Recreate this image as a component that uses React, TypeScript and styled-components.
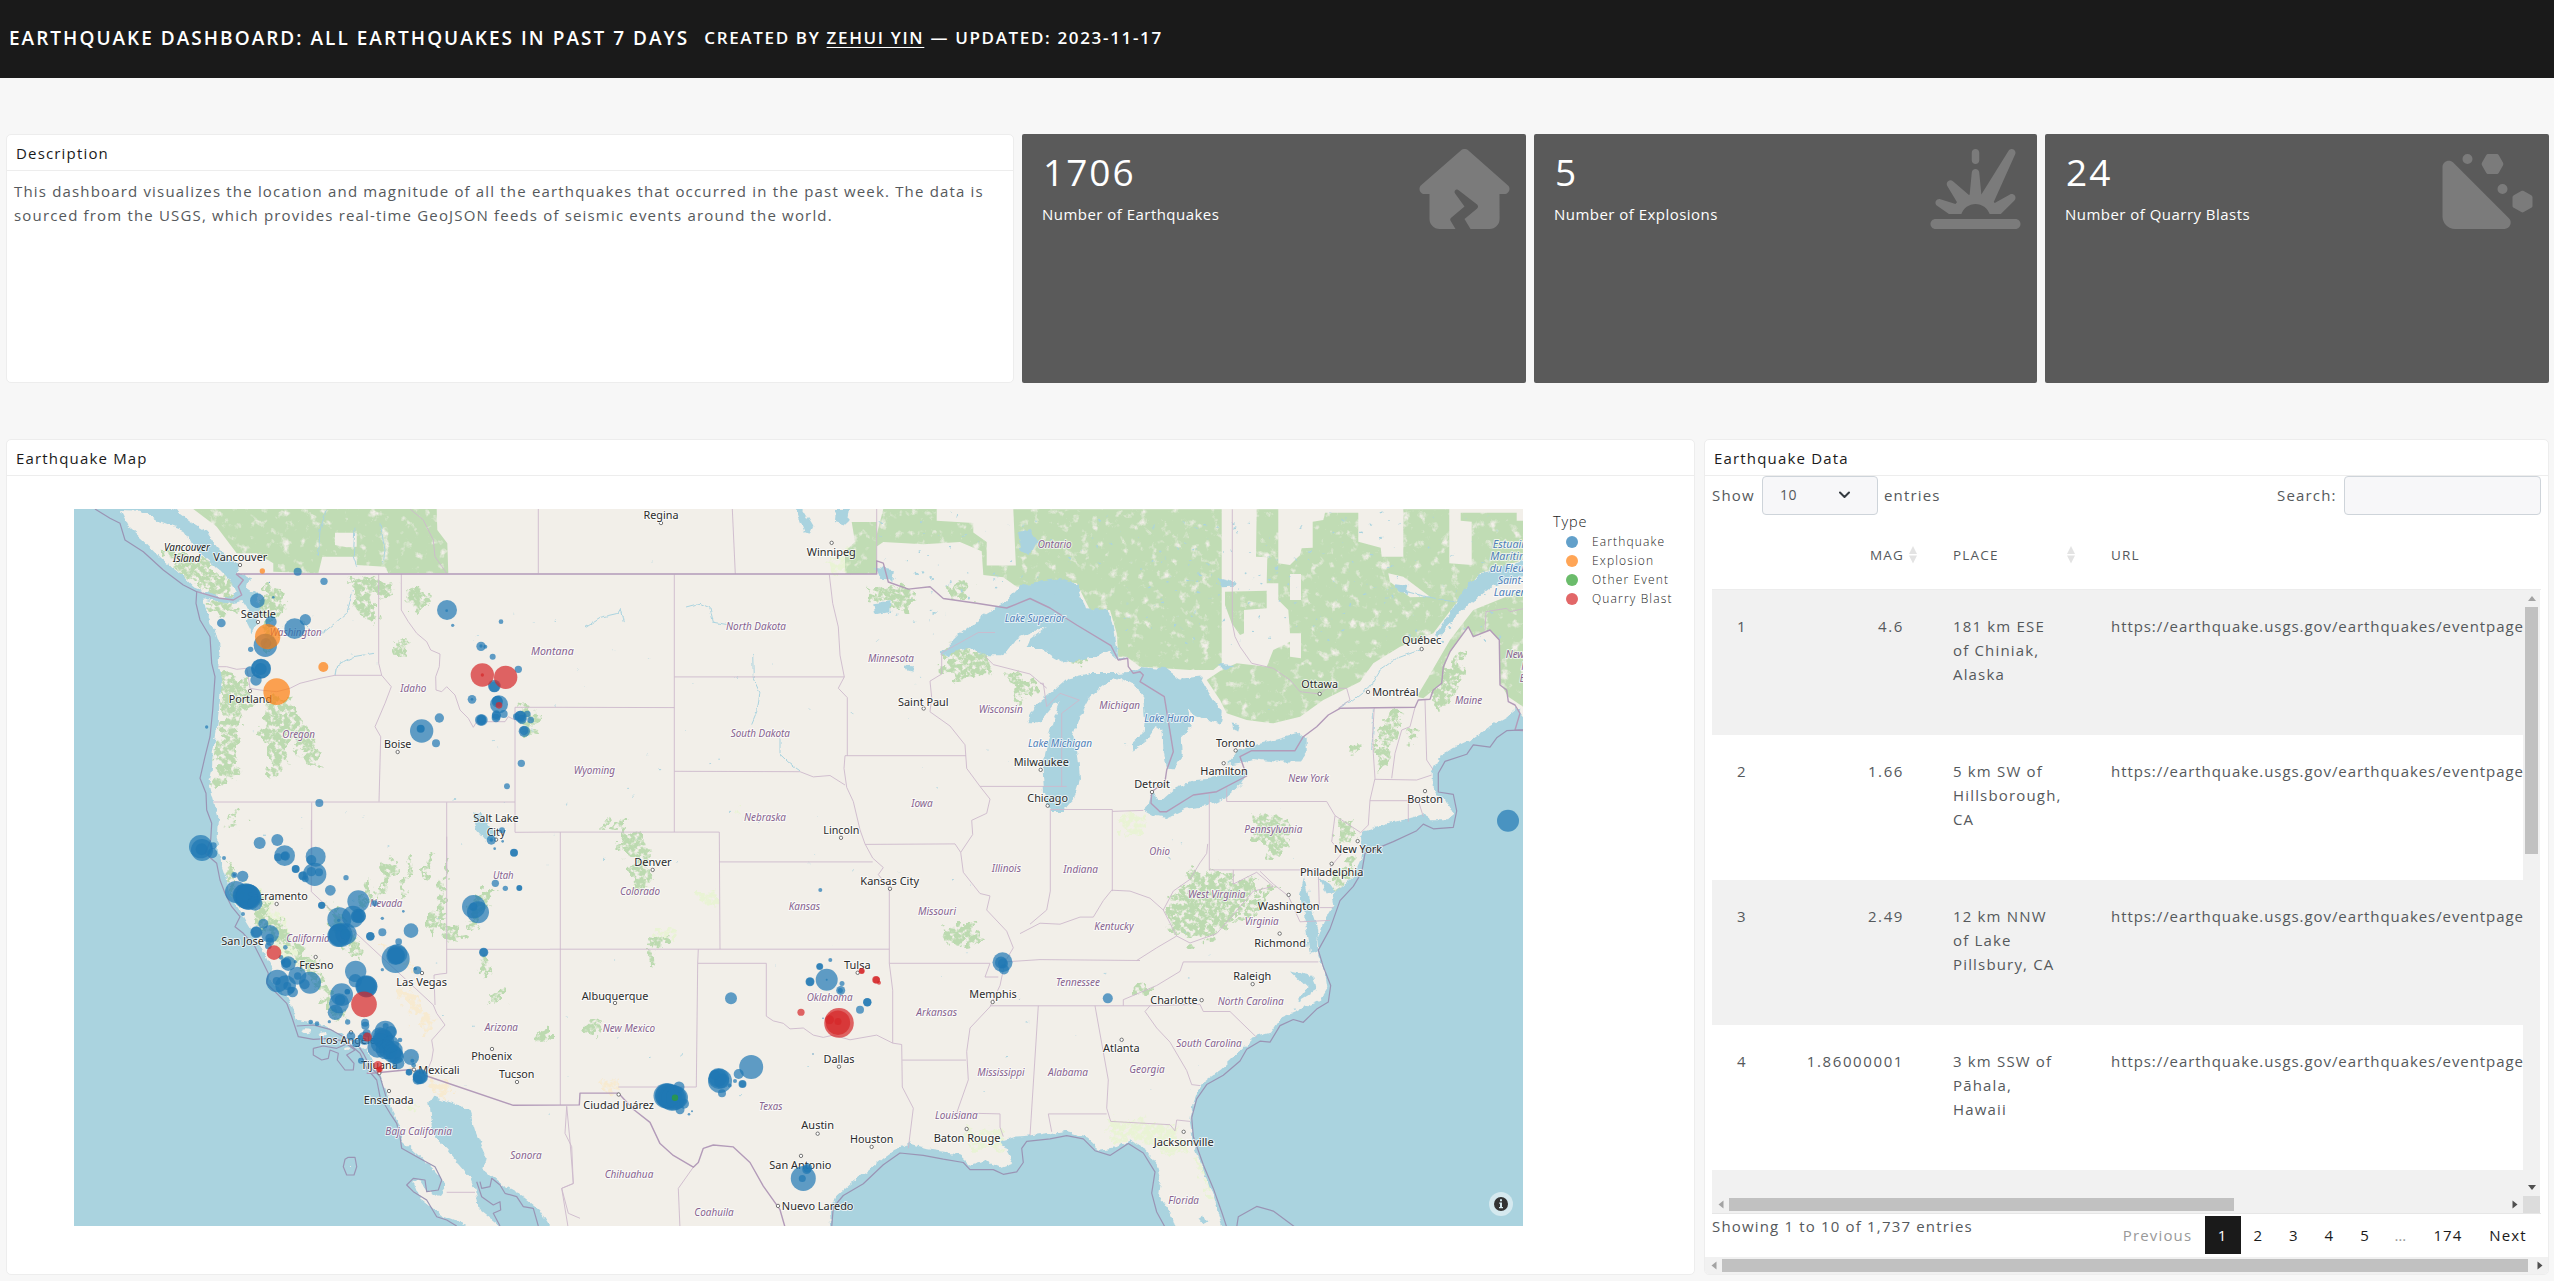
import React from 'react';
import styled, { createGlobalStyle } from 'styled-components';
import { FaHouseCrack, FaExplosion, FaHillRockslide } from 'react-icons/fa6';

const GlobalStyle = createGlobalStyle`
  *, *::before, *::after { box-sizing: border-box; }
  html, body { margin: 0; background: #f7f7f7; overflow: hidden; }
  body {
    font-family: "Open Sans", Lato, sans-serif;
    font-size: 15px;
    line-height: 24px;
    letter-spacing: 1.17px;
    color: #55595c;
  }
`;

/* ---------- page chrome ---------- */

const Page = styled.div`
  display: flex;
  flex-direction: column;
  height: 1281px;
  width: 2554px;
`;

const TopBar = styled.header`
  display: flex;
  align-items: center;
  gap: 15px;
  flex: 0 0 78px;
  padding: 0 9px 2px;
  background: #1a1a1a;
  color: #fff;
  white-space: nowrap;
`;

const Title = styled.h1`
  margin: 0;
  font-size: 19px;
  font-weight: 600;
  letter-spacing: 2.02px;
`;

const Byline = styled.span`
  font-size: 17px;
  font-weight: 600;
  letter-spacing: 1.66px;
`;

const AuthorLink = styled.a`
  color: inherit;
  text-decoration: underline;
  text-underline-offset: 3px;
  text-decoration-thickness: 1px;
`;

const SummaryRow = styled.section`
  display: grid;
  grid-template-columns: 1008px 504px 503px 504px;
  column-gap: 8px;
  flex: 0 0 249px;
  margin: 56px 5px 0 6px;
`;

const DetailRow = styled.section`
  display: grid;
  grid-template-columns: 1689px 845px;
  column-gap: 9px;
  flex: 0 0 836px;
  margin: 56px 5px 0 6px;
`;

const Card = styled.article`
  display: flex;
  flex-direction: column;
  overflow: hidden;
  min-width: 0;
  background: #fff;
  border: 1px solid #ededed;
  border-radius: 5px;
`;

const CardHeader = styled.h2`
  flex: 0 0 36px;
  margin: 0;
  padding: 6px 9px 0;
  border-bottom: 1px solid #ededed;
  color: #1a1a1a;
  font-size: 15px;
  font-weight: 400;
  letter-spacing: 1.17px;
`;

const Blurb = styled.p`
  margin: 8px 7px;
`;

/* ---------- value boxes ---------- */

const ValueBox = styled.article`
  display: flex;
  justify-content: space-between;
  padding: 15px 16px 0 20px;
  border-radius: 2px;
  background: #5a5a5a;
  color: #fff;
`;

const Value = styled.div`
  height: 44px;
  padding-left: 1px;
  font-size: 37px;
  font-weight: 500;
  line-height: 45px;
  letter-spacing: 2px;
`;

const ValueCaption = styled.div`
  margin-top: 9px;
  font-weight: 500;
  letter-spacing: 0.47px;
`;

const ValueIcon = styled.div`
  height: 80px;
  color: #7b7b7b;
  font-size: 80px;
  line-height: 0;
  svg { width: 91px; height: 80px; }
`;

type Stat = { value: string; caption: string; icon: React.ReactNode };
const stats: Stat[] = [
  { value: '1706', caption: 'Number of Earthquakes', icon: <FaHouseCrack /> },
  { value: '5', caption: 'Number of Explosions', icon: <FaExplosion /> },
  { value: '24', caption: 'Number of Quarry Blasts', icon: <FaHillRockslide /> },
];

/* ---------- map ---------- */

const MapBody = styled.div`
  display: flex;
  align-items: flex-start;
  gap: 30px;
  padding: 33px 0 0 67px;
`;

const MapSvg = styled.svg`
  display: block;
  flex: none;
  width: 1449px;
  height: 717px;
  letter-spacing: 0;
`;

const Legend = styled.div`
  padding-top: 3px;
  color: #222;
  font-weight: 300;
`;

const LegendTitle = styled.div`
  height: 20px;
  font-size: 14.5px;
  line-height: 20px;
  letter-spacing: 0.9px;
`;

const LegendItem = styled.div`
  display: flex;
  align-items: center;
  gap: 14px;
  height: 19px;
  padding-left: 13px;
  font-size: 12px;
  line-height: 19px;
  letter-spacing: 1.15px;
`;

const Swatch = styled.span<{ $color: string }>`
  width: 12px;
  height: 12px;
  border-radius: 50%;
  background: ${(p) => p.$color};
  opacity: 0.7;
`;

const BLUE = '#1f77b4';
const ORANGE = '#ff7f0e';
const GREEN = '#2ca02c';
const RED = '#d62728';

/* Each sheet has its own origin and scale; shapes are digitised per sheet. */
type Sheet = [number, number, number, number];
const NW: Sheet = [60, 490, 3, 3];
const SW: Sheet = [180, 820, 3, 3];
const MID: Sheet = [550, 490, 3, 2.119];
const EAST: Sheet = [1040, 490, 3, 2.119];
const NE: Sheet = [1040, 500, 3, 3];
const SOUTH: Sheet = [0, 2.54, 1, 1.00522];

const on = (s: Sheet, coords: string) => {
  const n = coords.trim().split(/[\s,]+/).map(Number);
  const out: string[] = [];
  for (let i = 0; i < n.length; i += 2) {
    out.push(`${(s[0] + n[i] / s[2]).toFixed(1)},${(s[1] + n[i + 1] / s[3]).toFixed(1)}`);
  }
  return out.join(' ');
};

const mainland = [
  on(NW, '330,50 390,95 440,125 470,170 500,200 540,225 530,250 570,262 560,290 590,310 600,350 590,400 575,430 560,400 570,360 550,330 500,340 430,325 440,370 465,420 480,470 475,530 485,570 478,650 470,720 458,790 455,850 448,880 460,930 475,980 470,1040 478,1090 490,1130'),
  on(SW, '140,170 145,210 165,250 190,285 200,305 215,330 235,370 255,400 275,440 265,480 300,510 330,540 340,575 350,600 400,608 430,615 480,640 510,665 560,690 580,730 598,760 612,800 625,845 635,870 660,915 665,960 720,1010 760,1050 795,1090 795,1105 780,1125 740,1112 715,1075 700,1085 720,1135 790,1190 860,1218 862,1230 968,1230 960,1218 900,1170 888,1120 870,1070 835,1030 800,985 765,955 755,900 748,850 760,830 820,850 868,870 890,940 920,1010 912,1050 975,1100 1030,1130 1080,1170 1110,1218 1112,1230'),
  on(MID, '845,1575 840,1530 860,1495 900,1470 950,1445 1000,1415 1040,1395 1080,1385 1130,1395 1180,1400 1230,1410 1260,1430 1300,1422 1350,1435 1390,1425 1370,1400 1350,1380 1400,1370 1440,1368 1500,1362'),
  on(EAST, '30,1365 80,1360 140,1372 180,1398 230,1392 270,1378 320,1400 350,1430 365,1470 360,1500 390,1530 410,1575 550,1575 545,1558 520,1500 490,1440 462,1390 450,1340 458,1300 480,1260 540,1230 600,1190 640,1160 690,1150 720,1120 770,1105 795,1095 840,1080 862,1055 855,1020 835,985 833,950 850,915 880,880 875,855 900,845 940,820 965,780 960,735 970,722 1040,706 1120,694 1160,685 1170,700 1225,700 1238,685 1215,655 1195,650 1178,630 1178,600 1200,565 1240,545 1300,525 1350,500 1400,480 1430,462 1460,485 1460,30'),
].join(' ') + ' 170,500';

const vancouverIsland = on(NW, '180,60 240,62 290,90 370,120 400,165 430,200 480,240 510,270 530,305 515,325 480,318 430,302 400,290 350,240 310,210 250,150 205,110');

const waters = [
  // Superior
  `${on(MID, '1175,345 1230,305 1300,265 1370,235 1410,205 1500,190')} ${on(NE, '60,240 110,250 135,325 200,330 212,345 225,400 235,470 262,475 240,482 210,455 130,478 75,490 40,470 0,440')} ${on(MID, '1500,335 1430,335 1440,318 1490,290 1400,315 1360,350 1305,350 1250,335 1175,352')}`,
  // Michigan and Huron
  on(EAST, '30,680 12,640 8,590 20,540 40,490 60,450 40,455 0,490 -35,490 -5,450 40,425 80,400 150,388 230,388 275,385 300,375 380,380 420,400 480,395 500,420 545,470 540,495 490,485 440,465 455,500 425,520 428,560 400,590 380,588 370,550 368,510 350,500 320,530 280,550 278,535 310,515 315,490 310,440 280,410 240,395 200,410 150,440 120,480 100,520 115,570 120,610 100,655 70,680'),
  // Erie
  on(EAST, '310,678 330,665 340,640 350,655 370,655 410,630 460,615 530,610 580,600 620,600 600,625 560,650 500,670 440,675 380,695 340,690'),
  // Ontario
  on(EAST, '560,582 590,555 640,540 720,525 770,515 800,530 800,555 780,575 700,575 640,570 600,578'),
  // Saint Lawrence
  on(NE, '1185,405 1215,360 1240,320 1270,270 1320,220 1400,200 1455,180 1455,225 1350,262 1290,310 1230,370 1195,415'),
  // Chesapeake, Delaware and Pamlico
  on(EAST, '795,820 780,860 790,890 800,940 810,985 830,980 835,930 815,890 805,850'),
  on(EAST, '835,820 860,855 885,850 870,835'),
  on(EAST, '750,1020 820,1030 830,1060 770,1085 800,1055'),
  // Long Island Sound
  on(EAST, '975,726 1060,712 1115,700 1070,718 1000,733'),
  // Great Salt Lake, Winnipeg and smaller lakes
  on(NW, '1240,970 1262,965 1280,1000 1305,1030 1300,1055 1275,1050 1250,1020'),
  on(MID, '735,40 760,40 790,75 780,90 760,88'),
  on(MID, '857,40 900,40 895,65 880,75 855,70'),
  on(MID, '975,165 1035,170 1030,192 990,190'),
  on(MID, '970,240 1022,235 1018,255 975,262'),
  on(NE, '1065,250 1105,255 1100,282 1075,275'),
  on(NE, '535,235 590,248 585,260 545,262'),
  on(NE, '535,492 585,495 570,508 540,505'),
  on(EAST, '575,495 600,498 595,512 580,508'),
  on(EAST, '475,1545 495,1535 505,1550 490,1558'),
  on(MID, '1070,370 1092,372 1088,385 1072,382'),
  on(MID, '1405,90 1440,82 1460,110 1440,140 1410,125'),
];

const solidForests = [
  on(NE, '-80,28 545,28 545,490 520,510 450,510 300,500 260,470 235,470 230,400 210,330 150,330 110,250 0,235 -70,250'),
  on(MID, '1000,40 1160,40 1160,65 1270,70 1270,90 1310,110 1310,160 1420,160 1468,140 1468,40 1500,40 1500,200 1400,205 1360,185 1300,180 1295,130 1230,110 1120,115 1000,110 980,120 980,95'),
  on(MID, '905,68 980,68 980,178 885,178 885,130 915,110'),
  on(NE, '555,275 680,272 680,325 612,330 612,400 600,405 575,370 555,315'),
  on(NE, '650,28 715,28 715,190 750,195 780,165 785,145 818,143 818,65 850,60 855,38 955,38 955,125 972,130 1022,143 1025,170 1090,170 1090,28 1228,28 1228,190 1295,195 1295,65 1262,62 1262,38 1430,38 1430,62 1449,62 1449,180 1320,220 1240,320 1180,400 1080,440 1000,490 960,545 850,600 780,650 700,670 620,660 560,640 540,600 500,540 545,510 590,490 680,500 700,450 750,425 750,470 783,475 783,400 750,400 745,330 715,300 715,250 680,250 682,172 648,170'),
  on(NE, '1300,330 1449,270 1449,620 1405,590 1380,550 1378,420 1350,390 1300,410 1285,380 1220,470 1205,550 1150,595 1130,590 1160,540 1230,420'),
  on(NW, '400,57 1130,57 1132,120 1162,160 1165,250 985,250 975,230 890,225 890,200 787,200 775,250 640,245 640,220 590,190 530,190 470,110'),
];

const roughForests = [
  on(NW, '300,160 370,190 430,210 500,270 525,310 500,325 430,300 370,260 330,230'),
  on(NW, '485,545 560,560 570,620 545,700 540,780 520,880 460,885 455,850 480,720'),
  on(NW, '440,350 470,330 540,345 520,365 450,375'),
  on(NW, '610,290 680,300 670,360 640,380 650,460 625,480 605,420 600,340'),
  on(NW, '625,610 690,620 700,680 680,760 670,860 620,850 630,760 600,740'),
  on(NW, '880,260 950,260 1010,300 940,320 950,400 900,370 880,310'),
  on(NW, '1030,290 1110,310 1110,350 1060,360 1030,340'),
  on(NW, '1010,450 1040,460 1035,510 1000,500'),
  on(NW, '1370,655 1435,670 1430,735 1375,730'),
  on(NW, '690,670 740,690 780,800 790,840 740,820 700,760'),
  on(NW, '500,960 550,975 540,1000 500,990'),
  on(SW, '135,110 160,150 160,200 200,230 180,250 145,210'),
  on(SW, '555,190 580,180 560,260 540,270'), on(SW, '620,110 650,130 610,230 590,240 600,180'),
  on(SW, '690,100 705,100 680,220 660,230'), on(SW, '745,90 755,100 745,180 730,170'),
  on(SW, '800,110 815,110 790,260 775,330 745,350 760,260 785,200'),
  on(SW, '780,310 850,330 840,360 780,355'), on(SW, '880,220 950,210 920,260 880,330 860,310'),
  on(SW, '910,400 930,430 920,470 895,460'), on(SW, '930,510 980,515 975,540 935,540'),
  on(SW, '1070,625 1110,620 1110,660 1080,665'), on(SW, '230,220 320,330 420,440 460,560 440,570 390,470 300,370 220,300'),
  on(SW, '440,240 500,300 540,390 530,420 480,350 440,290'), on(SW, '440,570 500,560 490,600 440,595'),
  on(MID, '200,690 235,695 230,720 290,740 290,800 310,840 250,850 240,780 205,760 215,720 160,715'),
  on(MID, '95,1130 160,1125 150,1150 110,1150'), on(MID, '290,980 310,985 315,1010 295,1008'),
  on(MID, '300,945 345,950 340,972 300,970'),
  on(MID, '950,205 1070,200 1095,245 1050,252 960,230'), on(MID, '1195,200 1260,200 1270,225 1210,230'),
  on(MID, '1175,345 1240,330 1330,360 1320,385 1240,400 1178,385'), on(MID, '1370,390 1450,400 1450,435 1410,445'),
  on(MID, '1175,930 1290,915 1280,960 1200,965'),
  on(EAST, '640,690 740,690 755,730 730,780 680,775 640,730'),
  on(EAST, '370,880 420,850 450,810 540,800 600,830 660,820 640,860 560,920 520,950 450,960 400,930'),
  on(EAST, '1020,500 1050,470 1085,470 1050,570 1020,600 1010,560'),
  on(EAST, '1095,515 1130,510 1130,535 1100,535'), on(EAST, '880,710 930,700 950,730 900,750'),
  on(EAST, '640,870 680,840 720,830 640,900 560,930'), on(EAST, '270,1060 330,1045 340,1060 280,1070'),
  on(EAST, '925,550 965,535 960,555 930,560'), on(EAST, '855,835 930,790 960,770 930,820 890,845'),
  on(EAST, '1170,440 1230,360 1280,340 1250,430 1200,460'), on(EAST, '90,350 140,345 130,370 100,365'),
];

const paleGreens = [
  on(MID, '430,850 500,850 500,870 435,870'), on(MID, '310,935 370,930 380,945 330,955'),
  on(MID, '555,690 610,690 600,700 560,700'), on(SW, '180,180 260,230 330,330 360,450 330,440 240,320'),
  on(MID, '240,830 300,830 300,860 245,860'), on(MID, '830,160 900,120 900,170 850,178'),
  on(EAST, '240,690 320,690 310,730 250,740'), on(EAST, '480,1400 520,1480 540,1540 470,1440'),
  on(EAST, '200,1330 400,1345 440,1400 380,1410 300,1380 210,1380'), on(MID, '1240,1350 1360,1360 1370,1400 1260,1400'),
  on(SW, '670,855 705,860 700,875 675,872'),
];

const sands = [
  on(SW, '745,755 815,800 805,840 760,825 740,800'), on(SW, '650,500 690,500 730,560 770,600 740,640 700,590 660,540'),
  on(SW, '700,710 740,750 710,755 690,730'), on(SW, '595,370 640,390 720,450 690,450'),
  on(MID, '155,1255 205,1248 210,1278 180,1275'),
];

const countryBorders = [
  `${on(NW, '528,252 1500,252')} ${on(MID, '0,178 980,178 980,150 1000,155 1015,195 1075,210 1140,205 1180,230 1280,240 1370,250 1440,230 1500,250')} ${on(NE, '110,375 213,437 235,480 263,475 265,500 280,520 300,515 310,525 300,545 373,590 400,755 380,810 375,845 335,875 333,910 360,935 380,935 460,885 530,875 620,828 600,770 635,752 765,752 790,710 830,680 865,645 900,625 1125,622 1135,600 1170,598 1180,570 1205,550 1210,500 1230,455 1285,380 1300,410 1350,390 1378,420 1380,555 1400,570 1405,605 1425,615 1440,640 1425,690 1455,692')}`,
  `${on(SW, '560,760 575,760 700,748 740,768 1000,856')} ${on(MID, '88,1303 90,1278 205,1278 250,1312 300,1340 330,1385 370,1410 430,1435 445,1425 460,1395 490,1388 550,1392 600,1425 640,1475 690,1525 705,1562')}`,
  on(NW, '528,252 550,270 535,290 545,315 520,330 480,325 410,305'),
];

const stateBorders = [
  on(NW, '956,252 956,520 965,556 994,590 975,640 945,710 962,740 957,935'),
  on(NW, '475,530 500,530 530,538 560,535 565,560 570,595 600,600 650,605 690,595 720,580 780,565 825,556 965,556'),
  on(NW, '460,936 1365,936'), on(NW, '1024,252 1024,360 1045,395 1070,430 1100,455 1112,480 1140,492 1138,530 1127,560 1128,600 1145,605 1160,590 1185,615 1200,660 1225,685 1240,712 1250,695 1335,695 1345,680 1365,690'),
  `${on(NW, '1365,690 1365,652 1500,652')} ${on(MID, '373,461')}`,
  `${on(NW, '1365,690 1365,1027')} ${on(MID, '0,725 508,725 510,973')}`,
  on(NW, '1435,57 1435,250'), on(NW, '1050,57 1090,90 1120,150 1125,200 1160,250'),
  `${on(SW, '394,0 394,215 760,555 770,580 795,615 755,660 760,690 755,720 735,768')}`, on(NW, '755,937 755,1140'),
  on(NW, '1160,937 1160,1140'), on(SW, '800,50 800,460 780,462 762,465 765,555'), on(SW, '800,388 1110,388'),
  on(MID, '0,973 1018,973'), on(MID, '31,725 31,1303'), on(MID, '373,179 373,725'), on(MID, '373,396 883,396'),
  on(MID, '373,596 750,597 790,608 840,605 885,625'), on(MID, '508,788 968,788'),
  on(MID, '885,563 882,590 890,630 910,660 930,720 945,750 968,780 1000,800 985,815 1018,843 1018,1003 1028,1060 1028,1172'),
  on(MID, '838,179 848,240 865,290 870,350 883,396 865,420 892,440 892,563'), on(MID, '885,563 1248,563'),
  on(MID, '945,751 1215,750 1232,768'),
  on(MID, '1175,345 1175,390 1140,405 1145,440 1140,470 1200,500 1245,540 1250,590 1290,628 1320,655 1310,685 1265,700 1268,730 1232,768 1240,810 1290,855 1320,860 1310,890 1370,935 1390,970 1365,1000 1350,1050 1320,1095 1260,1140 1250,1190 1255,1250 1220,1320 1350,1322 1350,1350 1360,1370'),
  on(MID, '1175,345 1285,302 1335,302'), on(MID, '1305,352 1330,370 1440,390 1490,420'), on(MID, '1290,628 1550,628'),
  on(MID, '1018,1003 1320,1003 1305,1032 1345,1032'), on(MID, '1057,1208 1248,1208'), on(MID, '1055,1175 1057,1265 1090,1310 1075,1395'),
  on(MID, '443,1003 649,1003 649,1115 670,1125 700,1130 720,1142 760,1140 790,1155 820,1160 850,1155 900,1165 980,1155 1028,1172 1055,1175'),
  on(MID, '445,973 443,1003 439,1265 205,1265'), on(MID, '547,40 556,178'), on(MID, '980,40 980,150'),
  on(MID, '1320,1093 1800,1093'), on(MID, '1465,1093 1440,1368'), on(MID, '1365,1000 1470,995 1770,997'),
  on(EAST, '31,677 31,850 20,890 -30,920'), on(EAST, '-60,940 0,918 60,920 120,905 160,905 190,870 215,848 270,850 330,865 370,890 400,850 450,825 480,790 500,770 503,750'),
  on(EAST, '31,677 217,677 217,850'), on(EAST, '217,681 310,679'),
  on(EAST, '508,645 508,805 835,805'), on(EAST, '560,630 560,660 860,660 885,690 960,725'), on(EAST, '885,690 875,745 905,770 870,800'),
  on(EAST, '835,805 838,885 880,885'), on(EAST, '430,1000 835,1000'), on(EAST, '290,997 350,970 410,945 370,890'),
  on(EAST, '410,945 450,960 530,940 580,900 640,850 700,840 650,810 580,835 580,805'), on(EAST, '660,808 700,835 745,860 780,915 870,912'),
  on(EAST, '430,1000 420,1020 350,1050 250,1080 250,1093'), on(EAST, '165,1093 205,1250 200,1310 212,1338 390,1345 405,1358 410,1335 450,1338'),
  on(EAST, '200,1322 25,1322 35,1360'), on(EAST, '330,1093 315,1105 350,1140 390,1170 440,1230 455,1260 480,1262'), on(EAST, '330,1093 480,1090 490,1105 570,1105 650,1160'),
  on(NE, '1003,622 998,700 1000,760 1005,835 990,900 985,975 960,1000'), on(NE, '1125,622 1110,680 1085,690 1065,760 1055,835'),
  on(NE, '1005,838 1130,840 1175,825'), on(NE, '1155,600 1160,780 1180,810'), on(NE, '990,902 1135,902 1150,950'), on(NE, '1105,902 1105,965'),
  on(NE, '577,28 577,370 585,410 600,440 635,490 700,505 750,540 780,575 840,582 860,565 920,565 930,600 895,625'),
  on(NE, '1335,390 1338,335 1400,325 1410,335 1455,325'), on(NE, '65,860 65,640 118,600 60,580 20,620 10,550 0,550'),
  on(SW, '1160,860 1155,940 1175,980 1180,1090 1145,1105 1165,1180 1200,1195'), on(MID, '50,1305 60,1380 70,1470 35,1480 55,1565'), on(MID, '430,1435 385,1480 390,1565'),
  on(SW, '800,1117 885,1117'),
];

const maritime = [
  `${on(NW, '105,57 150,85 180,100 195,150 250,185 310,240 370,285 410,305 408,340 420,390 450,440 455,520 465,560 458,660 450,740 435,800 420,865 438,910 440,960 455,1000 452,1050')} ${on(SW, '75,100 110,130 120,180 135,220 155,260 180,290 165,320 190,340 225,380 245,420 265,460 260,490 290,520 320,550 335,590 345,620 355,650 400,658 450,655 500,665 540,700 560,745 590,780 600,830 630,880 650,910 660,950 665,985 710,1010 765,1040 785,1080 775,1110 740,1115 735,1080 700,1075 680,1095 700,1115 740,1140 770,1190 800,1200 830,1218')}`,
  `${on(MID, '845,1562 850,1520 880,1495 940,1470 1000,1430 1050,1405 1120,1410 1180,1418 1240,1425 1260,1440 1330,1440 1360,1450 1400,1445 1420,1425 1415,1395 1430,1380 1500,1375')} ${on(EAST, '80,1368 130,1375 165,1400 210,1410 265,1385 310,1405 345,1445 335,1490 350,1530 375,1562')}`,
  on(EAST, '560,1562 545,1530 520,1480 490,1430 460,1370 455,1330 470,1290 500,1260 550,1240 600,1210 620,1185 660,1168 690,1170 720,1135 760,1122 790,1128 830,1100 865,1085 872,1050 850,1010 835,975 870,930 900,870 940,840 965,810 975,770 1060,745 1130,722 1150,708 1180,718 1240,715 1250,680 1240,645 1195,640 1195,600 1215,575 1280,560 1300,540 1350,545 1370,525 1400,510 1455,508'),
  on(EAST, '590,1562 595,1540 650,1518 700,1528 765,1562'),
  on(SW, '400,685 430,678 470,685 500,672 525,690 500,705 522,730 520,750 495,750 472,720 475,700 450,690 445,715 425,720 400,705 400,685'),
  on(SW, '505,1012 525,1012 530,1040 522,1065 500,1065 490,1040 495,1018 505,1012'),
  on(SW, '900,1085 905,1105 930,1100 935,1075 960,1095 975,1120 1010,1130 1030,1160 1060,1165 1075,1218'),
  on(SW, '890,1085 905,1130 940,1155 960,1145 962,1170 940,1180 960,1218'),
  on(SW, '350,618 400,615 450,628 490,650 530,670 550,700 570,740 600,770 618,830'),
];

const rivers = [
  on(MID, '408,248 450,240 480,250 490,280 530,285'), on(MID, '105,290 150,270 200,262 210,250 220,280'), on(MID, '608,345 610,400 630,430 620,470 605,495'),
  on(MID, '690,525 690,560 720,580 750,595'), on(NW, '725,390 770,440 800,420 860,370 880,300'), on(NW, '825,555 830,525 880,500 940,490'),
  on(NE, '1140,450 1070,475 1020,510 990,560 940,600 895,625'), on(NE, '1000,625 1000,680 995,750'), on(NE, '1100,275 1160,290 1240,305'),
  on(NW, '800,57 780,120 775,200'), on(NW, '885,110 880,200 890,230'), on(NW, '960,100 975,180 970,220'),
];

type Label = [string, number, number, number];
const cityText: [Sheet, Label[]][] = [
  [NW, [['Vancouver', 541, 213, 162], ['Seattle', 595, 383, 105], ['Portland', 571, 640, 130], ['Boise', 1013, 774, 82], ['Salt Lake', 1308, 996, 136], ['City', 1308, 1037, 56]]],
  [SW, [['Sacramento', 292, 240, 182], ['San Jose', 188, 375, 128], ['Fresno', 409, 446, 103], ['Las Vegas', 725, 497, 152], ['Los Angeles', 512, 673, 182], ['Tijuana', 598, 748, 110], ['Mexicali', 777, 762, 124], ['Ensenada', 626, 851, 150], ['Phoenix', 935, 720, 123], ['Tucson', 1010, 773, 106]]],
  [MID, [['Regina', 333, 62, 105], ['Winnipeg', 844, 139, 147], ['Saint Paul', 1120, 457, 152], ['Lincoln', 874, 729, 108], ['Denver', 309, 797, 112], ['Kansas City', 1019, 837, 176], ['Tulsa', 922, 1016, 80], ['Albuquerque', 195, 1080, 200], ['Memphis', 1329, 1076, 142], ['Dallas', 867, 1214, 93], ['Ciudad Juárez', 206, 1311, 212], ['Austin', 803, 1355, 98], ['Houston', 965, 1384, 130], ['San Antonio', 751, 1438, 186], ['Baton Rouge', 1251, 1381, 200], ['Nuevo Laredo', 803, 1526, 215], ['Milwaukee', 1474, 585, 166], ['Chicago', 1493, 661, 122]]],
  [EAST, [['Québec', 1145, 327, 118], ['Ottawa', 839, 420, 110], ['Montréal', 1066, 436, 139], ['Toronto', 587, 544, 118], ['Hamilton', 552, 604, 142], ['Detroit', 336, 631, 107], ['Boston', 1155, 663, 107], ['New York', 954, 769, 144], ['Philadelphia', 875, 818, 190], ['Washington', 746, 889, 186], ['Richmond', 720, 968, 155], ['Raleigh', 637, 1038, 114], ['Charlotte', 402, 1089, 142], ['Atlanta', 244, 1191, 110], ['Jacksonville', 431, 1390, 180]]],
];
const stateText: [Sheet, Label[]][] = [
  [NW, [['Washington', 707, 438, 156], ['Oregon', 716, 743, 98], ['Idaho', 1060, 606, 78]]],
  [SW, [['Nevada', 618, 262, 98], ['Utah', 970, 177, 62], ['California', 384, 366, 130], ['Arizona', 964, 632, 100], ['Sonora', 1038, 1017, 94], ['Baja California', 716, 946, 200]]],
  [MID, [['Montana', 7, 350, 128], ['North Dakota', 618, 296, 180], ['South Dakota', 631, 523, 178], ['Minnesota', 1023, 364, 138], ['Wisconsin', 1352, 473, 132], ['Wyoming', 133, 602, 124], ['Nebraska', 645, 701, 126], ['Iowa', 1116, 672, 65], ['Colorado', 270, 858, 120], ['Kansas', 763, 889, 94], ['Illinois', 1369, 810, 88], ['Missouri', 1161, 900, 114], ['Oklahoma', 839, 1083, 138], ['New Mexico', 237, 1148, 157], ['Arkansas', 1160, 1115, 122], ['Texas', 662, 1313, 70], ['Mississippi', 1353, 1241, 142], ['Louisiana', 1219, 1333, 128], ['Chihuahua', 237, 1458, 146], ['Coahuila', 492, 1539, 118]]],
  [EAST, [['Ontario', 44, 123, 102], ['Michigan', 239, 464, 122], ['New York', 806, 618, 122], ['Maine', 1286, 453, 82], ['Pennsylvania', 700, 726, 174], ['Ohio', 359, 773, 62], ['Indiana', 122, 811, 104], ['West Virginia', 530, 864, 172], ['Kentucky', 222, 932, 118], ['Virginia', 665, 921, 102], ['Tennessee', 114, 1052, 132], ['North Carolina', 632, 1091, 198], ['South Carolina', 507, 1181, 196], ['Alabama', 84, 1241, 120], ['Georgia', 321, 1235, 106], ['Florida', 431, 1512, 92], ['New Brunswick', 1496, 356, 198], ['Nouveau-', 1506, 381, 124], ['Brunswick', 1504, 406, 130]]],
];
const waterText: [Sheet, Label[]][] = [
  [EAST, [['Lake Superior', -15, 280, 182], ['Lake Huron', 388, 492, 150], ['Lake Michigan', 60, 545, 192], ['Estuaire', 1415, 123, 114], ['Maritime', 1416, 148, 130], ['du Fleuve', 1416, 173, 134], ['Saint-', 1413, 199, 78], ['Laurent', 1416, 224, 110]]],
];
const islandText: [Sheet, Label[]][] = [[NW, [['Vancouver', 381, 182, 138], ['Island', 380, 217, 82]]]];

const towns: [Sheet, [number, number][]][] = [
  [NW, [[540, 225], [594, 396], [570, 603], [1013, 786], [1308, 1049]]],
  [SW, [[290, 252], [407, 411], [726, 459], [513, 637], [598, 759], [702, 749], [627, 813], [936, 687], [1011, 786]]],
  [MID, [[333, 70], [845, 112], [1121, 463], [1472, 593], [873, 737], [308, 805], [1020, 845], [923, 1023], [195, 1087], [1328, 1085], [867, 1222], [206, 1281], [803, 1364], [965, 1392], [753, 1411], [1250, 1354], [684, 1517], [1493, 669]]],
  [EAST, [[1145, 337], [839, 432], [984, 428], [587, 552], [551, 579], [336, 640], [1155, 638], [953, 744], [875, 792], [746, 858], [719, 940], [638, 1047], [485, 1081], [245, 1165], [431, 1360]]],
];

/* Events: x, y, radius, all in sheet units. */
type Dot = [number, number, number];
const quakes: [Sheet, Dot[]][] = [
  [NW, [[713, 245, 12], [792, 274, 11], [592, 332, 22], [640, 322, 4], [628, 277, 2], [484, 399, 13], [633, 395, 17], [736, 389, 17], [704, 416, 31], [572, 478, 8], [616, 466, 35], [618, 460, 16], [603, 536, 30], [603, 536, 29], [602, 537, 18], [570, 545, 16], [588, 570, 17], [440, 711, 5], [778, 939, 12], [1161, 360, 30], [1160, 362, 4], [1178, 406, 5], [1323, 395, 7], [1263, 469, 14], [1263, 468, 5], [1276, 470, 6], [1298, 500, 9], [1375, 538, 11], [1303, 588, 19], [1303, 590, 16], [1236, 628, 13], [1236, 628, 4], [1312, 635, 17], [1317, 643, 27], [1312, 632, 15], [1262, 690, 17], [1266, 690, 17], [1265, 690, 14], [1309, 678, 14], [1308, 684, 13], [1309, 674, 13], [1331, 672, 12], [1382, 680, 18], [1380, 678, 16], [1386, 688, 14], [1369, 680, 10], [1402, 672, 10], [1412, 690, 10], [1393, 724, 17], [1392, 722, 13], [1085, 723, 35], [1082, 716, 12], [1082, 716, 11], [1138, 684, 14], [1128, 760, 12], [1384, 820, 11], [1341, 889, 9], [1326, 1021, 9], [1294, 1050, 14], [1294, 1050, 5], [1328, 1054, 4], [1304, 1076, 4], [1362, 1088, 12], [1362, 1088, 11]]],
  [SW, [[62, 80, 35], [66, 90, 33], [65, 88, 18], [100, 77, 10], [97, 100, 15], [132, 114, 6], [239, 69, 18], [292, 60, 18], [314, 107, 31], [316, 108, 14], [314, 108, 12], [294, 112, 12], [407, 110, 30], [394, 120, 15], [404, 163, 35], [394, 155, 14], [417, 157, 12], [370, 168, 14], [367, 167, 12], [376, 177, 10], [347, 147, 12], [347, 147, 11], [498, 173, 8], [451, 211, 16], [425, 256, 11], [425, 256, 10], [163, 165, 9], [163, 165, 5], [188, 169, 17], [168, 216, 33], [190, 225, 32], [198, 228, 38], [203, 230, 38], [206, 232, 38], [205, 229, 36], [225, 250, 22], [189, 282, 6], [535, 244, 33], [478, 298, 36], [476, 301, 5], [519, 290, 33], [535, 288, 22], [538, 288, 20], [530, 290, 17], [584, 250, 9], [670, 274, 4], [607, 295, 5], [482, 345, 36], [476, 347, 34], [498, 342, 32], [477, 345, 32], [497, 343, 16], [571, 349, 13], [571, 349, 12], [607, 337, 12], [693, 332, 22], [250, 311, 15], [229, 337, 18], [229, 336, 16], [270, 342, 27], [269, 354, 13], [270, 365, 12], [265, 378, 10], [316, 382, 7], [303, 412, 7], [309, 425, 7], [325, 431, 22], [319, 428, 15], [319, 430, 13], [346, 425, 5], [881, 260, 35], [894, 277, 33], [880, 260, 12], [946, 190, 11], [976, 205, 8], [1018, 204, 9], [1018, 204, 8], [911, 397, 14], [911, 397, 12], [647, 417, 42], [652, 402, 30], [647, 407, 28], [648, 408, 25], [656, 365, 10], [712, 451, 12], [706, 446, 5], [607, 449, 5], [527, 454, 32], [526, 482, 20], [559, 499, 33], [560, 500, 32], [559, 498, 29], [352, 467, 27], [353, 468, 11], [390, 488, 33], [374, 493, 15], [292, 483, 34], [290, 483, 12], [317, 497, 31], [322, 498, 12], [338, 516, 16], [332, 510, 10], [485, 524, 34], [502, 515, 8], [502, 515, 8], [477, 550, 30], [480, 540, 16], [466, 577, 23], [503, 606, 8], [448, 605, 5], [392, 606, 7], [411, 611, 7], [513, 648, 13], [555, 608, 12], [556, 617, 12], [543, 722, 9], [554, 655, 20], [616, 634, 32], [617, 618, 9], [633, 636, 18], [600, 650, 28], [608, 655, 30], [612, 660, 30], [592, 683, 30], [602, 670, 30], [617, 688, 30], [625, 690, 28], [637, 700, 28], [644, 705, 26], [650, 710, 22], [640, 690, 28], [655, 730, 18], [632, 672, 25], [560, 640, 12], [528, 670, 12], [541, 652, 8], [660, 660, 7], [693, 711, 24], [697, 722, 6], [687, 757, 10], [687, 757, 9], [701, 736, 7], [721, 770, 23], [721, 770, 21], [718, 772, 19], [713, 779, 15]]],
  [SOUTH, [
    [820.3, 892.2, 2], [819.7, 969, 3.5], [819.7, 969, 3], [830.3, 962.5, 2], [810, 984.3, 4.5], [810, 984.3, 4], [826.7, 982.3, 11], [826.7, 982.3, 1], [842, 986, 2.5], [840.7, 993, 4.5], [840.3, 993, 2.5], [867.3, 1005, 4.2], [867.3, 1005, 4], [860, 1012.5, 4], [731, 1001, 6], [1002.5, 964.7, 10], [1001, 965, 6], [1003, 966, 5], [1004, 972, 5], [1107.8, 1001, 5], [1508, 822.4, 11],
    [751.2, 1070, 12], [718, 1081, 9], [735, 1084, 2], [738.7, 1077, 5], [742.5, 1087, 4], [742.5, 1087, 3.5], [720, 1084, 12], [718.7, 1081.5, 10.5], [721.7, 1084, 7.5], [722, 1096.5, 4], [729.7, 1088.5, 2], [715, 1078, 5],
    [666, 1099, 12.5], [668, 1099, 12.5], [670, 1100, 12.5], [672, 1101, 13], [674, 1101, 12.5], [667, 1099, 12], [677, 1101, 11], [679, 1090, 5.5], [684, 1107, 5], [680, 1113, 4.5], [689, 1117.5, 1.3], [692, 1114.5, 1], [803.3, 1182, 12.5], [806.7, 1173, 4.5], [807.7, 1171.5, 4.5], [802.3, 1182, 3.5], [813, 1057, 0.8], [823, 1021, 0.8],
  ]],
];
const blasts: [Sheet, Dot[]][] = [
  [NW, [[1267, 555, 35], [1267, 555, 5], [1337, 562, 35], [1317, 646, 10]]],
  [SW, [[282, 398, 22], [552, 553, 38.5], [562, 651, 13.5], [594, 736, 13], [597, 750, 8], [600, 748, 8]]],
  [SOUTH, [[801, 1015, 3.6], [861.7, 973.5, 3], [861.7, 973.5, 2.6], [876, 982.3, 3.8], [876.5, 982.5, 3.5], [879, 985.3, 2], [839, 1025.7, 14.8], [838, 1025.5, 12.2], [829.5, 1022.5, 4.5], [838, 1024.3, 3.5]]],
];
const explosions: Dot[] = [[607, 243, 8], [623, 440, 38], [790, 531, 15], [650, 605, 40]];

const Labels = ({ sets, color, italic }: { sets: [Sheet, Label[]][]; color: string; italic?: boolean }) => (
  <g
    fill={color}
    stroke="#fff"
    strokeOpacity={0.7}
    strokeWidth={2}
    strokeLinejoin="round"
    paintOrder="stroke"
    fontSize={11}
    fontFamily='"Noto Sans", "Open Sans", sans-serif'
    fontStyle={italic ? 'italic' : 'normal'}
    textAnchor="middle"
  >
    {sets.map(([s, labels]) =>
      labels.map(([text, x, y, w]) => (
        <text key={text + x} x={s[0] + x / s[2]} y={s[1] + y / s[3]} textLength={w / s[2]} lengthAdjust="spacingAndGlyphs">
          {text}
        </text>
      )),
    )}
  </g>
);

const Dots = ({ items, color, sheet }: { items: Dot[]; color: string; sheet: Sheet }) => (
  <g fill={color} fillOpacity={0.7}>
    {items.map(([x, y, r], i) => (
      <circle key={i} cx={sheet[0] + x / sheet[2]} cy={sheet[1] + y / sheet[3]} r={r / sheet[2]} />
    ))}
  </g>
);

/* Scatter of tiny lakes over the Canadian Shield and the northern plains. */
const lakelets = Array.from({ length: 420 }, (_, i) => {
  const a = Math.abs(Math.sin(i * 12.9898) * 43758.5453) % 1;
  const b = Math.abs(Math.sin(i * 78.233) * 12543.123) % 1;
  const north = i < 280;
  return {
    x: north ? 880 + a * 620 : 240 + a * 1080,
    y: north ? 512 + b * 130 : 560 + b * 560,
    r: 0.4 + ((i * 7) % 10) / (north ? 8 : 14),
  };
});

const EarthquakeMap = () => (
  <MapSvg viewBox="74 509 1449 717" role="img" aria-label="Earthquake map">
    <defs>
      <filter id="ragged" x="0" y="0" width="100%" height="100%" colorInterpolationFilters="sRGB">
        <feTurbulence type="fractalNoise" baseFrequency="0.11" numOctaves="3" seed="4" result="n" />
        <feDisplacementMap in="SourceGraphic" in2="n" scale="7" xChannelSelector="R" yChannelSelector="G" />
      </filter>
      <filter id="wobble" x="74" y="509" width="1449" height="717" filterUnits="userSpaceOnUse" colorInterpolationFilters="sRGB">
        <feTurbulence type="fractalNoise" baseFrequency="0.14" numOctaves="2" seed="9" result="n" />
        <feDisplacementMap in="SourceGraphic" in2="n" scale="4" xChannelSelector="R" yChannelSelector="G" />
      </filter>
      <filter id="woods" x="0" y="0" width="100%" height="100%" colorInterpolationFilters="sRGB">
        <feTurbulence type="fractalNoise" baseFrequency="0.09" numOctaves="3" seed="7" result="n" />
        <feDisplacementMap in="SourceGraphic" in2="n" scale="24" xChannelSelector="R" yChannelSelector="G" result="d" />
        <feTurbulence type="fractalNoise" baseFrequency="0.2" numOctaves="4" seed="21" />
        <feColorMatrix values="0 0 0 0 0  0 0 0 0 0  0 0 0 0 0  5 0 0 0 -1.6" result="m" />
        <feComposite in="d" in2="m" operator="in" />
      </filter>
      <filter id="speckle" x="0" y="0" width="100%" height="100%" colorInterpolationFilters="sRGB">
        <feTurbulence type="fractalNoise" baseFrequency="0.1" numOctaves="5" seed="3" />
        <feColorMatrix values="0 0 0 0 0  0 0 0 0 0  0 0 0 0 0  4 0 0 0 -0.65" result="m" />
        <feComposite in="SourceGraphic" in2="m" operator="in" />
      </filter>
      <clipPath id="landClip"><polygon points={mainland} /><polygon points={vancouverIsland} /></clipPath>
    </defs>
    <rect x="74" y="509" width="1449" height="717" fill="#aad3df" />
    <g fill="#f2efe9" filter="url(#ragged)">
      <polygon points={mainland} />
      <polygon points={vancouverIsland} />
      {[[380, 635, 10], [430, 640, 8], [500, 690, 7], [511, 1040, 3], [718, 1105, 6], [500, 640, 5]].map(([x, y, r]) => (
        <ellipse key={x + y} cx={180 + x / 3} cy={820 + y / 3} rx={r / 2} ry={r / 4} />
      ))}
    </g>
    <g clipPath="url(#landClip)">
      <g filter="url(#woods)" fill="#e9f3d5">{paleGreens.map((p) => <polygon key={p} points={p} />)}</g>
      <g filter="url(#woods)" fill="#f7ead0">{sands.map((p) => <polygon key={p} points={p} />)}</g>
      <g filter="url(#speckle)" fill="#c0dcb4">{solidForests.map((p) => <polygon key={p} points={p} />)}</g>
      <g fill="#f2efe9">
        <polygon points={on(NW, '825,128 890,128 890,170 860,172 825,165')} />
        <rect x="1290" y="574" width="11" height="26" />
        <polygon points={on(NE, '1045,220 1090,230 1170,290 1110,292 1050,245')} />
      </g>
      <g filter="url(#woods)" fill="#bcdab0">{roughForests.map((p) => <polygon key={p} points={p} />)}</g>
    </g>
    <g fill="#aad3df" filter="url(#ragged)">
      {waters.map((p) => <polygon key={p} points={p} />)}
      {lakelets.map((l, i) => <ellipse key={i} cx={l.x} cy={l.y} rx={l.r} ry={l.r * 0.7} />)}
    </g>
    <g fill="none" stroke="#aad3df" strokeWidth="1" filter="url(#wobble)">{rivers.map((p) => <polyline key={p} points={p} />)}</g>
    <g fill="none" stroke="#cdb9cc" strokeWidth="0.9" strokeLinejoin="round">{stateBorders.map((p) => <polyline key={p} points={p} />)}</g>
    <g fill="none" stroke="#b39bb9" strokeWidth="1.4" strokeLinejoin="round">{countryBorders.map((p) => <polyline key={p} points={p} />)}</g>
    <g fill="none" stroke="#9a94b4" strokeWidth="1.2" strokeLinejoin="round">{maritime.map((p) => <polyline key={p} points={p} />)}</g>
    <g fill="#fff" stroke="#555" strokeWidth="0.8">
      {towns.map(([s, pts]) => pts.map(([x, y]) => <circle key={`${x}-${y}`} cx={s[0] + x / s[2]} cy={s[1] + y / s[3]} r="1.7" />))}
    </g>
    <Labels sets={stateText} color="#87638f" italic />
    <Labels sets={waterText} color="#4f80b8" italic />
    <Labels sets={islandText} color="#222" italic />
    <Labels sets={cityText} color="#2b2b2b" />
    {quakes.map(([s, d], i) => <Dots key={i} items={d} color={BLUE} sheet={s} />)}
    <Dots items={explosions} color={ORANGE} sheet={NW} />
    <Dots items={[[675, 1101, 3.2]]} color={GREEN} sheet={SOUTH} />
    {blasts.map(([s, d], i) => <Dots key={i} items={d} color={RED} sheet={s} />)}
    <circle cx="1501" cy="1204" r="12" fill="#fff" fillOpacity="0.5" />
    <circle cx="1501" cy="1204" r="7" fill="#333" />
    <path d="M1499.200 1202.500h2.800v4.600h1v1.200h-4v-1.200h1v-3.400h-.8zM1500 1199.300h2v1.900h-2z" fill="#d5e9ef" />
  </MapSvg>
);

/* ---------- data table ---------- */

const DataBody = styled.div`
  display: flex;
  flex-direction: column;
  flex: 1;
  padding: 0 7px;
`;

const Controls = styled.div`
  display: flex;
  align-items: center;
  height: 39px;
`;

const ControlText = styled.span<{ $push?: boolean; $width: number }>`
  width: ${(p) => p.$width}px;
  margin-left: ${(p) => (p.$push ? 'auto' : 0)};
  padding-bottom: 2px;
  white-space: nowrap;
`;

const SelectBox = styled.div`
  display: flex;
  align-items: center;
  justify-content: space-between;
  width: 116px;
  height: 39px;
  margin-right: 6px;
  padding: 0 27px 2px 17px;
  border: 1px solid #ced4da;
  border-radius: 4px;
  background: #f7f7f9;
  font-size: 14px;
  letter-spacing: 0.4px;
`;

const SearchBox = styled.div`
  width: 197px;
  height: 39px;
  border: 1px solid #ced4da;
  border-radius: 4px;
  background: #f7f7f9;
`;

const columns = '80px 136px 158px 1fr';

const HeadRow = styled.div`
  display: grid;
  grid-template-columns: ${columns};
  align-items: center;
  height: 75px;
  padding-top: 6px;
  border-bottom: 1px solid #ececec;
  font-size: 13.5px;
  font-weight: 500;
`;

const HeadCell = styled.div<{ $right?: boolean }>`
  display: flex;
  align-items: center;
  justify-content: ${(p) => (p.$right ? 'flex-end' : 'space-between')};
  gap: 5px;
  padding-left: 25px;
  padding-right: ${(p) => (p.$right ? '11px' : '11px')};
`;

const ScrollFrame = styled.div`
  display: grid;
  grid-template-columns: 811px 17px;
  grid-template-rows: 606px 17px;
  border-bottom: 1px solid #e6e6e6;
`;

const Viewport = styled.div`
  overflow: hidden;
`;

const Row = styled.div<{ $odd: boolean }>`
  display: grid;
  grid-template-columns: ${columns};
  height: 145px;
  padding-top: 24px;
  background: ${(p) => (p.$odd ? '#f1f1f1' : '#fff')};
`;

const Cell = styled.div<{ $right?: boolean }>`
  padding: ${(p) => (p.$right ? '0 24px 0 0' : '0 20px 0 25px')};
  text-align: ${(p) => (p.$right ? 'right' : 'left')};
`;

const MagCell = styled(Cell)`
  letter-spacing: 1.6px;
`;

const UrlCell = styled(Cell)`
  letter-spacing: 0.93px;
  white-space: nowrap;
`;

const Track = styled.div<{ $vertical?: boolean }>`
  display: flex;
  flex-direction: ${(p) => (p.$vertical ? 'column' : 'row')};
  align-items: center;
  background: #f1f1f1;
`;

const Arrow = styled.span<{ $dir: 'up' | 'down' | 'left' | 'right'; $dim?: boolean }>`
  display: grid;
  place-items: center;
  flex: 0 0 17px;
  width: 17px;
  height: 17px;
  &::before {
    content: '';
    border: 4px solid transparent;
    border-bottom: 5px solid ${(p) => (p.$dim ? '#a3a3a3' : '#505050')};
    border-top: 0;
    transform: rotate(${(p) => ({ up: 0, right: 90, down: 180, left: 270 })[p.$dir]}deg);
  }
`;

const Thumb = styled.span<{ $vertical?: boolean; $size: number }>`
  background: #c1c1c1;
  width: ${(p) => (p.$vertical ? 13 : p.$size)}px;
  height: ${(p) => (p.$vertical ? p.$size : 13)}px;
  margin-${(p) => (p.$vertical ? 'bottom' : 'right')}: auto;
`;

const Corner = styled.div`
  background: #dcdcdc;
`;

const Footer = styled.div`
  display: flex;
  align-items: flex-start;
  justify-content: space-between;
  height: 42px;
`;

const Pager = styled.nav`
  display: flex;
  padding: 2px 2px 0 0;
`;

const PageButton = styled.span<{ $active?: boolean; $muted?: boolean; $width: number }>`
  display: flex;
  align-items: center;
  justify-content: center;
  width: ${(p) => p.$width}px;
  height: 38px;
  background: ${(p) => (p.$active ? '#1a1a1a' : 'transparent')};
  color: ${(p) => (p.$active ? '#fff' : p.$muted ? '#999' : '#1a1a1a')};
`;

const OuterTrack = styled(Track)`
  flex: 0 0 17px;
`;

const SortIcon = () => (
  <svg width="8" height="18" viewBox="0 0 8 18" fill="#e3e3e3" aria-hidden="true">
    <path d="M4 0l4 8H0zM4 17.500L0 9.500h8z" />
  </svg>
);

const Chevron = () => (
  <svg width="11" height="8" viewBox="0 0 11 8" fill="none" stroke="#343a40" strokeWidth="2" strokeLinecap="round" strokeLinejoin="round">
    <path d="M1 1.500l4.500 4.500L10 1.500" />
  </svg>
);

const rows = [
  { id: '1', mag: '4.6', place: '181 km ESE of Chiniak, Alaska' },
  { id: '2', mag: '1.66', place: '5 km SW of Hillsborough, CA' },
  { id: '3', mag: '2.49', place: '12 km NNW of Lake Pillsbury, CA' },
  { id: '4', mag: '1.86000001', place: '3 km SSW of Pāhala, Hawaii' },
  { id: '', mag: '', place: '' },
];

const pages: { label: string; width: number; active?: boolean; muted?: boolean }[] = [
  { label: 'Previous', width: 94, muted: true },
  { label: '1', width: 36, active: true },
  { label: '2', width: 35.5 },
  { label: '3', width: 35.5 },
  { label: '4', width: 35.5 },
  { label: '5', width: 36 },
  { label: '…', width: 36, muted: true },
  { label: '174', width: 58 },
  { label: 'Next', width: 62 },
];

export default function App() {
  return (
    <Page>
      <GlobalStyle />
      <TopBar>
        <Title>EARTHQUAKE DASHBOARD: ALL EARTHQUAKES IN PAST 7 DAYS</Title>
        <Byline>
          CREATED BY <AuthorLink>ZEHUI YIN</AuthorLink> — UPDATED: 2023-11-17
        </Byline>
      </TopBar>
      <SummaryRow>
        <Card>
          <CardHeader>Description</CardHeader>
          <Blurb>
            This dashboard visualizes the location and magnitude of all the earthquakes that occurred in the past week. The data is
            <br />
            sourced from the USGS, which provides real-time GeoJSON feeds of seismic events around the world.
          </Blurb>
        </Card>
        {stats.map((s) => (
          <ValueBox key={s.caption}>
            <div>
              <Value>{s.value}</Value>
              <ValueCaption>{s.caption}</ValueCaption>
            </div>
            <ValueIcon>{s.icon}</ValueIcon>
          </ValueBox>
        ))}
      </SummaryRow>
      <DetailRow>
        <Card>
          <CardHeader>Earthquake Map</CardHeader>
          <MapBody>
            <EarthquakeMap />
            <Legend>
              <LegendTitle>Type</LegendTitle>
              <LegendItem><Swatch $color={BLUE} />Earthquake</LegendItem>
              <LegendItem><Swatch $color={ORANGE} />Explosion</LegendItem>
              <LegendItem><Swatch $color={GREEN} />Other Event</LegendItem>
              <LegendItem><Swatch $color={RED} />Quarry Blast</LegendItem>
            </Legend>
          </MapBody>
        </Card>
        <Card>
          <CardHeader>Earthquake Data</CardHeader>
          <DataBody>
            <Controls>
              <ControlText $width={50}>Show</ControlText>
              <SelectBox>10<Chevron /></SelectBox>
              <ControlText $width={60}>entries</ControlText>
              <ControlText $push $width={67}>Search:</ControlText>
              <SearchBox />
            </Controls>
            <HeadRow>
              <HeadCell />
              <HeadCell $right>MAG<SortIcon /></HeadCell>
              <HeadCell>PLACE<SortIcon /></HeadCell>
              <HeadCell>URL</HeadCell>
            </HeadRow>
            <ScrollFrame>
              <Viewport>
                {rows.map((r, i) => (
                  <Row key={i} $odd={i % 2 === 0}>
                    <Cell>{r.id}</Cell>
                    <MagCell $right>{r.mag}</MagCell>
                    <Cell>{r.place}</Cell>
                    <UrlCell>{r.id && 'https://earthquake.usgs.gov/earthquakes/eventpage/'}</UrlCell>
                  </Row>
                ))}
              </Viewport>
              <Track $vertical>
                <Arrow $dir="up" $dim />
                <Thumb $vertical $size={247} />
                <Arrow $dir="down" />
              </Track>
              <Track>
                <Arrow $dir="left" $dim />
                <Thumb $size={505} />
                <Arrow $dir="right" />
              </Track>
              <Corner />
            </ScrollFrame>
            <Footer>
              <span>Showing 1 to 10 of 1,737 entries</span>
              <Pager>
                {pages.map((p) => (
                  <PageButton key={p.label} $width={p.width} $active={p.active} $muted={p.muted}>{p.label}</PageButton>
                ))}
              </Pager>
            </Footer>
          </DataBody>
          <OuterTrack>
            <Arrow $dir="left" $dim />
            <Thumb $size={806} />
            <Arrow $dir="right" />
          </OuterTrack>
        </Card>
      </DetailRow>
    </Page>
  );
}
